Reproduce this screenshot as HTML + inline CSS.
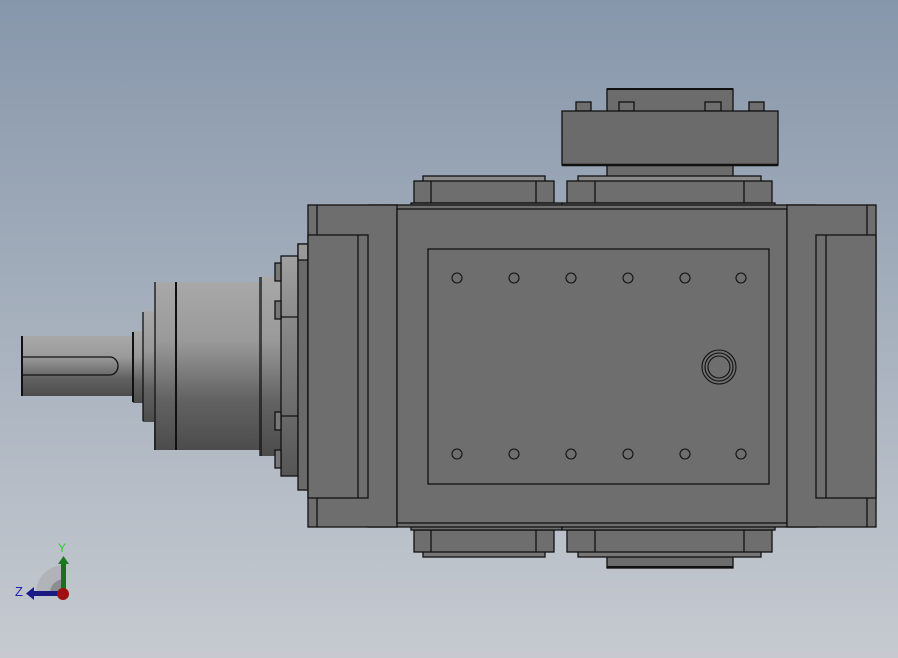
<!DOCTYPE html>
<html><head><meta charset="utf-8"><style>
html,body{margin:0;padding:0;width:898px;height:658px;overflow:hidden}
svg{display:block}
text{font-family:"Liberation Sans",sans-serif}
</style></head><body>
<svg width="898" height="658" viewBox="0 0 898 658" xmlns="http://www.w3.org/2000/svg">
<defs>
<linearGradient id="bg" x1="0" y1="0" x2="0" y2="1">
<stop offset="0" stop-color="#8797ab"/><stop offset="1" stop-color="#c6cad0"/>
</linearGradient>
<linearGradient id="cyl" x1="0" y1="0" x2="0" y2="1">
<stop offset="0" stop-color="#a8a8a8"/><stop offset="0.35" stop-color="#9a9a9a"/><stop offset="0.7" stop-color="#626262"/><stop offset="1" stop-color="#4c4c4c"/>
</linearGradient>
<linearGradient id="flg" x1="0" y1="0" x2="0" y2="1">
<stop offset="0" stop-color="#a0a0a0"/><stop offset="0.5" stop-color="#7a7a7a"/><stop offset="1" stop-color="#555"/>
</linearGradient>
</defs>
<rect width="898" height="658" fill="url(#bg)"/>
<g stroke="#111" stroke-width="1.3" fill="#6e6e6e">
<!-- shaft -->
<rect x="21" y="336" width="113" height="60" fill="url(#cyl)" stroke="none"/>
<line x1="22" y1="336" x2="22" y2="396" stroke-width="2"/>
<path d="M22 357 H110 A8 9 0 0 1 110 375 H22" fill="none"/>
<rect x="133" y="331" width="10" height="72" fill="url(#cyl)" stroke="none"/>
<line x1="133" y1="332" x2="133" y2="402" stroke-width="2"/>
<rect x="143" y="311" width="11" height="111" fill="url(#cyl)" stroke="none"/>
<line x1="143" y1="312" x2="143" y2="421"/>
<!-- motor housing -->
<rect x="154" y="282" width="127" height="168" fill="url(#cyl)" stroke="none"/>
<line x1="155" y1="282" x2="155" y2="450"/>
<line x1="176" y1="282" x2="176" y2="450" stroke-width="2"/>
<line x1="260" y1="277" x2="260" y2="456"/>
<rect x="260" y="277" width="21" height="179" fill="url(#cyl)" stroke="none"/>
<line x1="261" y1="277" x2="261" y2="456"/>
<!-- flange -->
<rect x="281" y="256" width="17" height="220" fill="url(#flg)"/>
<rect x="298" y="244" width="10" height="246" fill="#6a6a6a"/>
<rect x="298" y="244" width="10" height="16" fill="#999"/>
<line x1="281" y1="317" x2="298" y2="317"/><line x1="281" y1="416" x2="298" y2="416"/>
<rect x="275" y="263" width="6" height="18" fill="#777"/>
<rect x="275" y="301" width="6" height="18" fill="#777"/>
<rect x="275" y="412" width="6" height="18" fill="#777"/>
<rect x="275" y="450" width="6" height="18" fill="#777"/>
<!-- top flange and hub -->
<rect x="607" y="89" width="126" height="90" fill="#6c6c6c"/>
<line x1="607" y1="89" x2="733" y2="89" stroke-width="2"/>
<rect x="576" y="102" width="15" height="9"/><rect x="619" y="102" width="15" height="9"/>
<rect x="705" y="102" width="16" height="9"/><rect x="749" y="102" width="15" height="9"/>
<rect x="562" y="111" width="216" height="54" fill="#6b6b6b"/>
<line x1="562" y1="165" x2="778" y2="165" stroke-width="2.5"/>
<!-- top caps -->
<rect x="423" y="176" width="122" height="6" fill="#8a8a8a"/>
<rect x="578" y="176" width="183" height="6" fill="#8a8a8a"/>
<rect x="414" y="181" width="140" height="22"/>
<line x1="431" y1="181" x2="431" y2="203"/><line x1="536" y1="181" x2="536" y2="203"/>
<rect x="567" y="181" width="205" height="22"/>
<line x1="595" y1="181" x2="595" y2="203"/><line x1="744" y1="181" x2="744" y2="203"/>
<rect x="411" y="203" width="151" height="7"/><rect x="562" y="203" width="213" height="7"/>
<!-- bottom caps -->
<rect x="607" y="552" width="126" height="16" fill="#6c6c6c"/>
<line x1="607" y1="567" x2="733" y2="567" stroke-width="2"/>
<rect x="423" y="551" width="122" height="6" fill="#777"/>
<rect x="578" y="551" width="183" height="6" fill="#777"/>
<rect x="414" y="530" width="140" height="22"/>
<line x1="431" y1="530" x2="431" y2="552"/><line x1="536" y1="530" x2="536" y2="552"/>
<rect x="567" y="530" width="205" height="22"/>
<line x1="595" y1="530" x2="595" y2="552"/><line x1="744" y1="530" x2="744" y2="552"/>
<rect x="411" y="523" width="151" height="7"/><rect x="562" y="523" width="213" height="7"/>
<!-- main body -->
<rect x="368" y="205" width="448" height="5"/>
<rect x="368" y="522" width="448" height="5"/>
<rect x="308" y="205" width="89" height="322"/>
<line x1="317" y1="205" x2="317" y2="527"/>
<rect x="308" y="235" width="60" height="263"/>
<line x1="358" y1="235" x2="358" y2="498"/>
<rect x="397" y="209" width="390" height="314"/>
<rect x="428" y="249" width="341" height="235"/>
<rect x="787" y="205" width="89" height="322"/>
<line x1="867" y1="205" x2="867" y2="527"/>
<rect x="816" y="235" width="60" height="263"/>
<line x1="826" y1="235" x2="826" y2="498"/>
<!-- holes -->
<g fill="none" stroke-width="1.1">
<circle cx="457" cy="278" r="5"/><circle cx="514" cy="278" r="5"/><circle cx="571" cy="278" r="5"/>
<circle cx="628" cy="278" r="5"/><circle cx="685" cy="278" r="5"/><circle cx="741" cy="278" r="5"/>
<circle cx="457" cy="454" r="5"/><circle cx="514" cy="454" r="5"/><circle cx="571" cy="454" r="5"/>
<circle cx="628" cy="454" r="5"/><circle cx="685" cy="454" r="5"/><circle cx="741" cy="454" r="5"/>
<circle cx="719" cy="367" r="17"/><circle cx="719" cy="367" r="14"/><circle cx="719" cy="367" r="11"/>
</g>
</g>
<!-- triad -->
<path d="M36 593 A28 28 0 0 1 64 565 V593 Z" fill="#b0b3b7"/>
<path d="M50 593 A14 14 0 0 1 64 579 V593 Z" fill="#8b8e92"/>
<rect x="61" y="563" width="5" height="30" fill="#1e6e1e"/>
<path d="M58 564 L63.5 556 L69 564 Z" fill="#1e7a1e"/>
<rect x="32" y="591" width="30" height="5" fill="#1a1a80"/>
<path d="M34 587 L26 593.5 L34 600 Z" fill="#1a1a90"/>
<circle cx="63" cy="594" r="6" fill="#a01010"/>
<text x="58" y="552" font-size="12" fill="#2ecc2e">Y</text>
<text x="15" y="596" font-size="13" fill="#2020b0">Z</text>
</svg>
</body></html>
